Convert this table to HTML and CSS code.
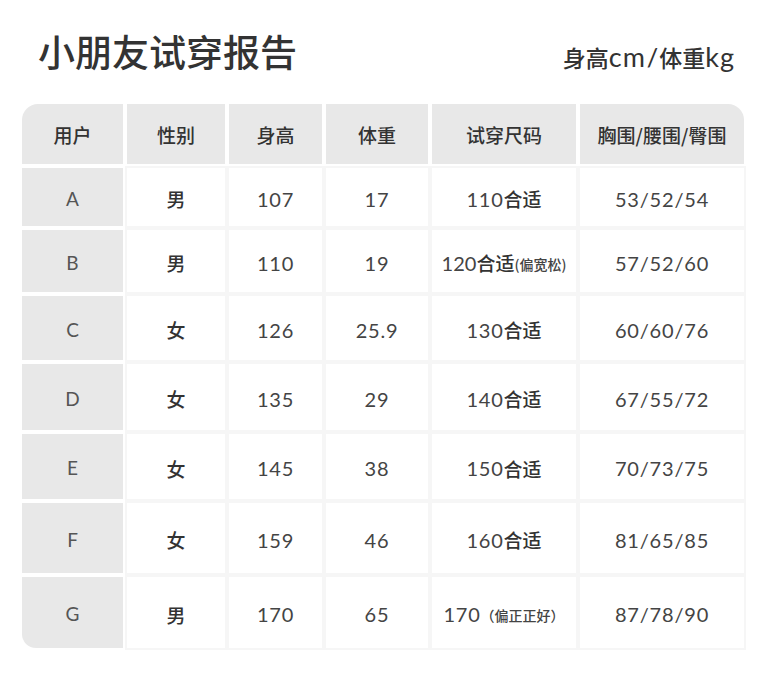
FILE: index.html
```html
<!DOCTYPE html>
<html lang="zh-CN">
<head>
<meta charset="utf-8">
<title>小朋友试穿报告</title>
<link rel="stylesheet" href="styles.css">
</head>
<body>
<div class="page">
  <header class="top">
    <h1 class="title">小朋友试穿报告</h1>
    <div class="unit">身高<span class="lat">cm</span><span class="slash">/</span>体重<span class="lat">kg</span></div>
  </header>
  <div class="table">
    <div class="th th-first">用户</div>
    <div class="th">性别</div>
    <div class="th">身高</div>
    <div class="th">体重</div>
    <div class="th">试穿尺码</div>
    <div class="th th-last">胸围/腰围/臀围</div>

    <div class="user">A</div><div class="td cn">男</div><div class="td">107</div><div class="td">17</div><div class="td">110<span class="cn">合适</span></div><div class="td">53/52/54</div>
    <div class="user">B</div><div class="td cn">男</div><div class="td">110</div><div class="td">19</div><div class="td tight">120<span class="cn">合适</span><span class="note">(偏宽松)</span></div><div class="td">57/52/60</div>
    <div class="user">C</div><div class="td cn">女</div><div class="td">126</div><div class="td">25.9</div><div class="td">130<span class="cn">合适</span></div><div class="td">60/60/76</div>
    <div class="user">D</div><div class="td cn">女</div><div class="td">135</div><div class="td">29</div><div class="td">140<span class="cn">合适</span></div><div class="td">67/55/72</div>
    <div class="user">E</div><div class="td cn">女</div><div class="td">145</div><div class="td">38</div><div class="td">150<span class="cn">合适</span></div><div class="td">70/73/75</div>
    <div class="user">F</div><div class="td cn">女</div><div class="td">159</div><div class="td">46</div><div class="td">160<span class="cn">合适</span></div><div class="td">81/65/85</div>
    <div class="user user-last">G</div><div class="td cn">男</div><div class="td">170</div><div class="td">65</div><div class="td">170<span class="note">（偏正正好）</span></div><div class="td">87/78/90</div>
  </div>
</div>
</body>
</html>
```

FILE: styles.css
```css
html, body {
  margin: 0;
  padding: 0;
  background: #ffffff;
}

body {
  font-family: "Lato", "Noto Sans CJK SC", sans-serif;
  color: #444;
}

.page {
  width: 776px;
  height: 677px;
  padding: 0 0 0 22px;
  box-sizing: border-box;
}

.top {
  display: flex;
  align-items: center;
  justify-content: space-between;
  height: 104px;
  padding: 0 9px 0 16px;
  width: 722px;
  box-sizing: border-box;
}

.title {
  margin: 0;
  font-family: "Noto Sans CJK SC", sans-serif;
  font-weight: 500;
  font-size: 37px;
  color: #333;
  line-height: 1;
  padding-bottom: 2px;
}

.unit {
  font-family: "Noto Sans CJK SC", sans-serif;
  font-weight: 500;
  font-size: 23px;
  color: #333;
  line-height: 1;
  padding-top: 8px;
  display: flex;
  align-items: baseline;
}

.lat {
  font-family: "Lato", sans-serif;
  font-weight: 400;
  font-size: 27px;
  letter-spacing: 1px;
  color: #333;
}

.slash {
  font-family: "Lato", sans-serif;
  font-size: 25px;
  padding: 0 1px;
}

.table {
  display: grid;
  grid-template-columns: 101px 98px 93px 102px 144px 164px;
  grid-template-rows: 60px 58px 62px 64px 66px 65px 70px 71px;
  gap: 4px;
  width: 722px;
}

.th, .user, .td {
  display: flex;
  align-items: center;
  justify-content: center;
  white-space: nowrap;
}

.th {
  background: #e8e8e8;
  font-family: "Noto Sans CJK SC", sans-serif;
  font-weight: 500;
  font-size: 19px;
  color: #333;
}

.th-first { border-top-left-radius: 16px; }
.th-last { border-top-right-radius: 16px; }

.user {
  grid-column: 1;
  background: #e8e8e8;
  font-size: 19px;
  color: #555;
  font-weight: 400;
  padding-top: 2px;
}

.user-last { border-bottom-left-radius: 14px; }

.td {
  background: #ffffff;
  outline: 2px solid #f6f6f6;
  font-size: 20px;
  color: #444;
  letter-spacing: 0.8px;
  padding-top: 3px;
}

.cn {
  font-family: "Noto Sans CJK SC", sans-serif;
  font-weight: 500;
  color: #333;
  letter-spacing: 0;
}

.td.cn { font-size: 19px; }

.td .cn { font-size: 19px; }

.note {
  font-family: "Noto Sans CJK SC", sans-serif;
  font-weight: 500;
  font-size: 14px;
  color: #444;
  letter-spacing: 0;
  padding-top: 2px;
}

.tight { letter-spacing: 0; }
```
